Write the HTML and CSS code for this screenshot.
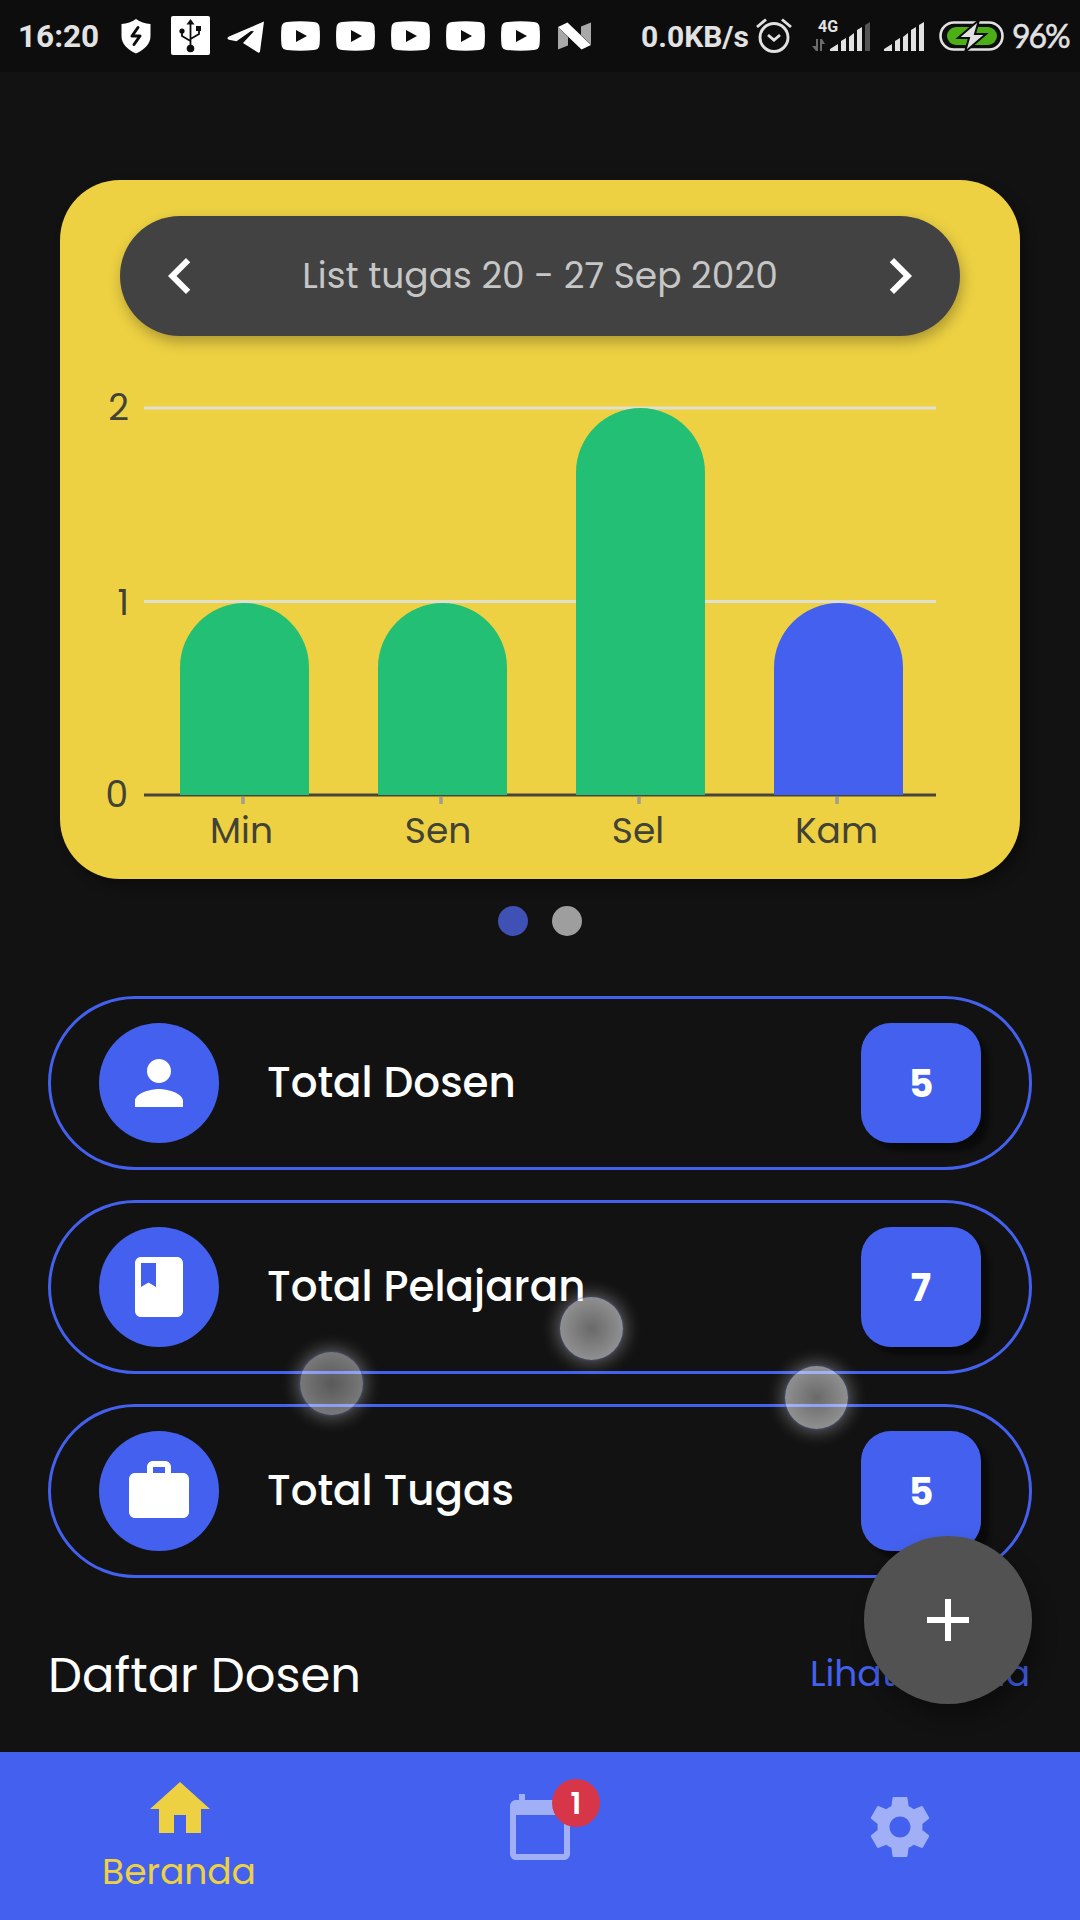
FILE: index.html
```html
<!DOCTYPE html>
<html lang="id">
<head>
<meta charset="utf-8">
<title>Beranda</title>
<link rel="stylesheet" href="styles.css">
</head>
<body>
<svg class="defs" aria-hidden="true">
  <symbol id="play" viewBox="0 0 39 30">
    <path fill="#fff" d="M6 1Q19.500-.6 33 1q5 .6 5.500 5 .9 9 0 18-.5 4.400-5.500 5-13.500 1.400-27 0-5-.6-5.500-5-.9-9 0-18Q1 1.600 6 1z"/>
    <path fill="#0d0d0d" d="M15 9v12l11-6z"/>
  </symbol>
</svg>

<header class="status">
  <span class="clock">16:20</span>
  <svg class="shield" viewBox="0 0 30 36"><path fill="#fff" d="M15 1c4 3 9 4.500 14.500 5v12c0 8-6 13.500-14.500 17.500C6.500 31.500.5 26 .5 18V6C6 5.500 11 4 15 1z"/><path d="M17 9.500 11 18h8l-6 8.500" fill="none" stroke="#0d0d0d" stroke-width="3" stroke-linejoin="round" stroke-linecap="round"/></svg>
  <svg class="usb" viewBox="0 0 39 39"><rect width="39" height="39" rx="2" fill="#fff"/><g fill="none" stroke="#0d0d0d" stroke-width="1.800"><path d="M19.500 6v27M11 15v5l8.500 5M28 14v4l-8.500 5"/></g><g fill="#0d0d0d"><path d="M19.500 3l4 5.500h-8z"/><circle cx="11" cy="15" r="2.600"/><path d="M25 10h5v5h-5z"/><circle cx="19.500" cy="32.500" r="3.800"/></g></svg>
  <svg class="plane" viewBox="0 0 38 32"><path fill="#fff" d="M37 .5 2 15.500c-2 1-2 2.500 0 3.300l7.500 1.500L24 10l3 .2L16 22l15 9.500c1 .5 1.800 0 2-1L37 .5z"/></svg>
  <svg class="play"><use href="#play"/></svg>
  <svg class="play"><use href="#play"/></svg>
  <svg class="play"><use href="#play"/></svg>
  <svg class="play"><use href="#play"/></svg>
  <svg class="play"><use href="#play"/></svg>
  <svg class="nougat" viewBox="0 0 33 28"><path fill="#a8a8a8" d="M0 5l10 10v8.500L0 27.500zM33 .5v22L23 13V4.500z"/><path fill="#fff" d="M0 5 9.500.5 33 23l-9.500 4.500z"/></svg>
  <span class="speed">0.0KB/s</span>
  <svg class="alarm" viewBox="0 0 36 36"><g fill="none" stroke="#e2e2e2" stroke-width="2.900"><circle cx="18" cy="19.500" r="14"/><path d="M12 17l6 5 6-5M1 9l9-7.500M35 9l-9-7.500"/></g></svg>
  <svg class="signal4g" viewBox="0 0 60 36">
    <text x="6" y="14" class="lte">4G</text>
    <g fill="#6b6b6b"><path d="M6 21v12H4l-4-5h4v-7zM8 33V21h2l3 5h-3v7z"/></g>
    <g fill="#e2e2e2"><path d="M18 33v-2l8-5v7zM29 33V23l5-3v13zM37 33V19l5-4v18zM45 33V12l5-3v24z"/></g>
    <path fill="#555" d="M53 33V7l5-3v29z"/>
  </svg>
  <svg class="signal" viewBox="0 0 40 30"><path fill="#e2e2e2" d="M0 30v-2l8-5v7zM11 30V20l5-3v13zM19 30V16l5-4v18zM27 30V9l5-3v24zM35 30V4l5-3v29z"/></svg>
  <svg class="battery" viewBox="0 0 65 32"><rect x="1.500" y="2.500" width="62" height="27" rx="13.500" fill="none" stroke="#e2e2e2" stroke-width="2.600"/><rect x="8" y="7" width="50" height="18" rx="9" fill="#4caf16"/><path fill="#e2e2e2" stroke="#0d0d0d" stroke-width="2" d="M40 0 19 18h11l-4 14 21-18H36z"/></svg>
  <span class="percent">96%</span>
</header>

<main>
  <section class="card">
    <div class="week">
      <svg class="icon" viewBox="0 0 24 24"><path d="M15.410 7.410 14 6l-6 6 6 6 1.410-1.410L10.830 12z"/></svg>
      <span class="week-label">List tugas 20 - 27 Sep 2020</span>
      <svg class="icon" viewBox="0 0 24 24"><path d="M10 6 8.590 7.410 13.170 12l-4.580 4.590L10 18l6-6z"/></svg>
    </div>
    <svg class="chart" viewBox="60 336 960 543">
      <g stroke="#e0e0d0" stroke-width="3"><path d="M144 408H936M144 601.500H936"/></g>
      <path d="M144 795H936" stroke="#47443c" stroke-width="3"/>
      <path d="M243 797v7M441 797v7M639 797v7M837 797v7" stroke="#a09e90" stroke-width="3.500"/>
      <g fill="#22bf74">
        <path d="M180 795V667.500a64.500 64.500 0 0 1 129 0V795z"/>
        <path d="M378 795V667.500a64.500 64.500 0 0 1 129 0V795z"/>
        <path d="M576 795V472.500a64.500 64.500 0 0 1 129 0V795z"/>
      </g>
      <path fill="#4361ee" d="M774 795V667.500a64.500 64.500 0 0 1 129 0V795z"/>
      <g class="axis" text-anchor="end">
        <text x="129" y="420">2</text><text x="129" y="615">1</text><text x="128" y="807">0</text>
      </g>
      <g class="axis" text-anchor="middle">
        <text x="241.500" y="843">Min</text>
        <text x="438" y="843">Sen</text>
        <text x="638" y="843">Sel</text>
        <text x="836.500" y="843">Kam</text>
      </g>
    </svg>
  </section>

  <div class="dots"><i class="dot active"></i><i class="dot"></i></div>

  <ul class="totals">
    <li class="total">
      <span class="badge-icon"><svg class="icon" viewBox="0 0 24 24"><path d="M12 12c2.210 0 4-1.790 4-4s-1.790-4-4-4-4 1.790-4 4 1.790 4 4 4zm0 2c-2.670 0-8 1.340-8 4v2h16v-2c0-2.660-5.330-4-8-4z"/></svg></span>
      <span class="name">Total Dosen</span><span class="count">5</span>
    </li>
    <li class="total">
      <span class="badge-icon"><svg class="icon" viewBox="0 0 24 24"><path d="M18 2H6c-1.100 0-2 .9-2 2v16c0 1.100.9 2 2 2h12c1.100 0 2-.9 2-2V4c0-1.100-.9-2-2-2zM6 4h5v8l-2.500-1.500L6 12V4z"/></svg></span>
      <span class="name">Total Pelajaran</span><span class="count">7</span>
    </li>
    <li class="total">
      <span class="badge-icon"><svg class="icon" viewBox="0 0 24 24"><path d="M20 6h-4V4c0-1.110-.89-2-2-2h-4c-1.110 0-2 .89-2 2v2H4c-1.110 0-1.990.89-1.990 2L2 19c0 1.110.89 2 2 2h16c1.110 0 2-.89 2-2V8c0-1.110-.89-2-2-2zm-6 0h-4V4h4v2z"/></svg></span>
      <span class="name">Total Tugas</span><span class="count">5</span>
    </li>
  </ul>

  <div class="section-head"><h2>Daftar Dosen</h2><a class="more">Lihat semua</a></div>
</main>

<nav class="tabs">
  <a class="tab active">
    <svg class="icon" viewBox="0 0 24 24"><path d="M10 20v-6h4v6h5v-8h3L12 3 2 12h3v8z"/></svg>
    <span>Beranda</span>
  </a>
  <a class="tab">
    <span class="tab-icon">
      <svg class="icon" viewBox="0 0 24 24"><path d="M20 3h-1V1h-2v2H7V1H5v2H4c-1.100 0-2 .9-2 2v16c0 1.100.9 2 2 2h16c1.100 0 2-.9 2-2V5c0-1.100-.9-2-2-2zm0 18H4V8h16v13z"/></svg>
      <b class="notice">1</b>
    </span>
  </a>
  <a class="tab">
    <svg class="icon" viewBox="0 0 24 24"><path d="M19.430 12.980c.04-.32.07-.64.07-.98s-.03-.66-.07-.98l2.110-1.650c.19-.15.24-.42.12-.64l-2-3.460c-.12-.22-.39-.3-.61-.22l-2.490 1c-.52-.4-1.080-.73-1.690-.98l-.38-2.650C14.460 2.180 14.250 2 14 2h-4c-.25 0-.46.18-.49.42l-.38 2.650c-.61.25-1.170.59-1.690.98l-2.490-1c-.23-.09-.49 0-.61.22l-2 3.460c-.13.22-.07.49.12.64l2.110 1.650c-.04.32-.07.65-.07.98s.03.66.07.98l-2.110 1.650c-.19.15-.24.42-.12.64l2 3.460c.12.22.39.3.61.22l2.490-1c.52.4 1.080.73 1.690.98l.38 2.650c.03.24.24.42.49.42h4c.25 0 .46-.18.49-.42l.38-2.650c.61-.25 1.170-.59 1.690-.98l2.490 1c.23.09.49 0 .61-.22l2-3.460c.12-.22.07-.49-.12-.64l-2.110-1.650zM12 15.500c-1.930 0-3.500-1.570-3.500-3.500s1.570-3.500 3.500-3.500 3.500 1.570 3.500 3.500-1.570 3.500-3.500 3.500z"/></svg>
  </a>
</nav>

<button class="fab"><svg class="icon" viewBox="0 0 24 24"><path d="M19 13h-6v6h-2v-6H5v-2h6V5h2v6h6z"/></svg></button>

<i class="touch touch-left"></i>
<i class="touch touch-mid"></i>
<i class="touch touch-right"></i>
</body>
</html>
```

FILE: styles.css
```css
* { box-sizing: border-box; }

body {
  margin: 0;
  width: 1080px;
  height: 1920px;
  position: relative;
  display: flex;
  flex-direction: column;
  overflow: hidden;
  background: #121212;
  color: #fff;
  font-family: Poppins, Inter, sans-serif;
}

.defs { position: absolute; width: 0; height: 0; }
.icon { width: 72px; height: 72px; fill: currentColor; display: block; flex: none; }

/* Status bar */
.status {
  height: 72px;
  flex: none;
  display: flex;
  align-items: center;
  padding: 0 0 1px 18px;
  background: #0d0d0d;
  color: #e2e2e2;
  font-family: Roboto, sans-serif;
  white-space: nowrap;
}
.status > * { flex: none; }
.clock { width: 103px; font-size: 31.5px; font-weight: 700; line-height: 40px; padding-top: 2px; }
.shield { width: 30px; height: 36px; margin-right: 20px; }
.usb { width: 39px; height: 39px; margin-right: 17px; }
.plane { width: 38px; height: 32px; margin: 2px 16px 0 0; }
.play { width: 39px; height: 30px; margin-right: 16px; }
.nougat { width: 33px; height: 28px; margin: 0 50px 0 2px; }
.speed { width: 115px; font-size: 30px; font-weight: 700; line-height: 40px; padding-top: 2px; }
.alarm { width: 36px; height: 36px; margin-right: 20px; }
.signal4g { width: 60px; height: 36px; margin-right: 12px; }
.lte { font: 700 16px Roboto, sans-serif; fill: #e2e2e2; }
.signal { width: 40px; height: 30px; margin-right: 15px; }
.battery { width: 65px; height: 32px; margin-right: 8px; }
.percent { font: 400 32px/40px Lato, sans-serif; letter-spacing: -2px; -webkit-text-stroke: .5px #e2e2e2; }

/* Weekly chart card */
.card {
  width: 960px;
  height: 699px;
  margin: 108px 60px 0;
  padding-top: 36px;
  border-radius: 60px;
  background: #edd143;
  box-shadow: 6px 6px 12px rgba(0, 0, 0, .35);
}
.week {
  height: 120px;
  margin: 0 60px;
  padding: 0 24px;
  display: flex;
  align-items: center;
  justify-content: space-between;
  border-radius: 60px;
  background: #424242;
  box-shadow: 2px 6px 14px rgba(0, 0, 0, .28);
}
.week-label { color: #c6c6c6; font-size: 36px; line-height: 54px; }
.chart { display: block; width: 960px; height: 543px; }
.axis { font-size: 36px; fill: #424236; }

.dots { display: flex; justify-content: center; gap: 24px; padding-top: 27px; }
.dot { width: 30px; height: 30px; border-radius: 50%; background: #9e9e9e; }
.dot.active { background: #3f51b5; }

/* Totals */
.totals { list-style: none; margin: 60px 48px 0; padding: 0; display: grid; gap: 30px; }
.total {
  height: 174px;
  padding: 0 48px;
  display: flex;
  align-items: center;
  border: 3px solid #4361ee;
  border-radius: 87px;
}
.badge-icon {
  width: 120px;
  height: 120px;
  display: grid;
  place-items: center;
  border-radius: 50%;
  background: #4361ee;
}
.name { flex: 1; padding-left: 48px; font-size: 42px; font-weight: 500; line-height: 60px; }
.count {
  width: 120px;
  height: 120px;
  border-radius: 30px;
  background: #4361ee;
  box-shadow: 8px 8px 4px rgba(0, 0, 0, .45);
  font-size: 38px;
  font-weight: 700;
  line-height: 121px;
  text-align: center;
}

.section-head {
  height: 72px;
  margin: 62px 50px 0 48px;
  display: flex;
  align-items: center;
  justify-content: space-between;
}
.section-head h2 { margin: 0; font-size: 48px; font-weight: 400; }
.more { color: #4361ee; font-size: 36px; padding-bottom: 5px; }

/* Bottom navigation */
.tabs {
  height: 168px;
  margin-top: auto;
  display: grid;
  grid-template-columns: repeat(3, 360px);
  background: #4361ee;
}
.tab {
  display: flex;
  flex-direction: column;
  align-items: center;
  justify-content: center;
  padding-bottom: 18px;
  color: #a1b0f6;
}
.tab.active { justify-content: flex-start; padding-top: 21px; color: #edd143; }
.tab.active span { font-size: 36px; line-height: 54px; margin-left: -2px; }
.tab-icon { position: relative; }
.notice {
  position: absolute;
  left: 48px;
  top: -12px;
  width: 48px;
  height: 48px;
  border-radius: 50%;
  background: #d73648;
  color: #fff;
  font-size: 30px;
  font-weight: 600;
  line-height: 49px;
  text-align: center;
}

.fab {
  position: absolute;
  left: 864px;
  top: 1536px;
  width: 168px;
  height: 168px;
  padding: 0;
  border: 0;
  border-radius: 50%;
  display: grid;
  place-items: center;
  background: #525252;
  color: #fff;
  box-shadow: 6px 12px 20px rgba(0, 0, 0, .32);
}

/* Touch indicators over the page */
.touch {
  position: absolute;
  width: 63px;
  height: 63px;
  border-radius: 50%;
  background: radial-gradient(circle, rgba(255, 255, 255, .37), rgba(255, 255, 255, .53) 70%);
  box-shadow: 0 0 2px 1px rgba(67, 80, 160, .5), 0 0 16px 4px rgba(255, 255, 255, .3);
}
.touch-left {
  left: 300px;
  top: 1352px;
  background: radial-gradient(circle, rgba(255, 255, 255, .3), rgba(255, 255, 255, .43) 70%);
}
.touch-mid { left: 560px; top: 1297px; }
.touch-right { left: 785px; top: 1366px; }
```
